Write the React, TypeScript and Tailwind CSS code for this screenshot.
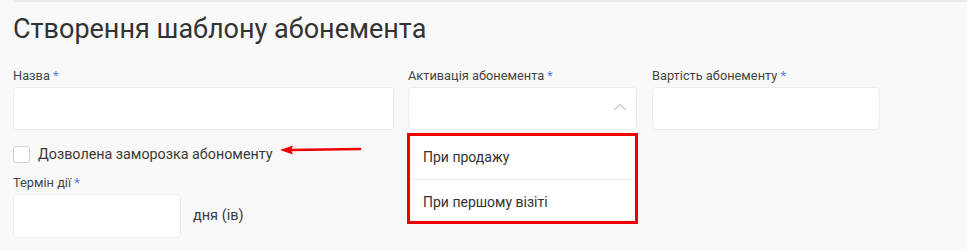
import React from "react";

function Label({ text }: { text: string }) {
  return (
    <div className="mb-[3px] h-[16px] text-[12.8px] leading-[16px] text-[#444]">
      {text} <span className="text-[#5b7cf0]">*</span>
    </div>
  );
}

function Input({ className = "" }: { className?: string }) {
  return (
    <div
      className={`h-[43px] rounded-[4px] border border-[#ededed] bg-white ${className}`}
    />
  );
}

export default function App() {
  return (
    <div className="relative h-[251px] w-[967px] overflow-hidden bg-[#f9f9f9] font-['Roboto',sans-serif]">
      <div className="ml-[13px] border-t-2 border-[#ececec]">
        <h1 className="mt-[11px] text-[27px] leading-[32px] font-normal text-[#333]">
          Створення шаблону абонемента
        </h1>

        <div className="mt-[23px] flex items-start">
          {/* left column */}
          <div className="w-[381px]">
            <Label text="Назва" />
            <Input />

            <div className="mt-[15px] flex items-center">
              <div className="h-[17px] w-[17px] rounded-[3px] border border-[#ccd2da] bg-white" />
              <span className="ml-[8px] text-[14.3px] leading-[18px] text-[#3a3a3a]">
                Дозволена заморозка абономенту
              </span>
              <svg
                className="ml-[8px] mt-[-8px]"
                width="82"
                height="10"
                viewBox="0 0 82 10"
                fill="none"
              >
                <path d="M10 5 L80 4" stroke="#f00000" strokeWidth="2.6" strokeLinecap="round" />
                <path d="M0 5 L13 0.5 L11 5 L13 9.5 Z" fill="#f00000" />
              </svg>
            </div>

            <div className="mt-[12px]">
              <Label text="Термін дії" />
              <div className="flex items-center">
                <Input className="h-[44px] w-[168px]" />
                <span className="ml-[12px] text-[14.5px] text-[#3a3a3a]">дня (ів)</span>
              </div>
            </div>
          </div>

          {/* activation select */}
          <div className="ml-[14px] w-[229px]">
            <Label text="Активація абонемента" />
            <div className="relative h-[43px] rounded-[4px] border border-[#ededed] bg-white">
              <svg
                className="absolute right-[9px] top-[15px]"
                width="14"
                height="8"
                viewBox="0 0 14 8"
                fill="none"
              >
                <path d="M1 7 L7 1.5 L13 7" stroke="#c6ccd4" strokeWidth="1.4" />
              </svg>
              {/* open dropdown menu */}
              <div className="absolute left-[-2px] top-[45px] z-10 w-[231px] border-[3px] border-[#f00000] bg-white">
                <div className="flex h-[44px] items-center border-b border-[#ececec] pl-[13px] text-[14px] text-[#333]">
                  При продажу
                </div>
                <div className="flex h-[41px] items-center pl-[13px] pt-[3px] text-[14px] text-[#333]">
                  При першому візіті
                </div>
              </div>
            </div>
          </div>

          <div className="ml-[15px] w-[228px]">
            <Label text="Вартість абонементу" />
            <Input />
          </div>
        </div>
      </div>
    </div>
  );
}
